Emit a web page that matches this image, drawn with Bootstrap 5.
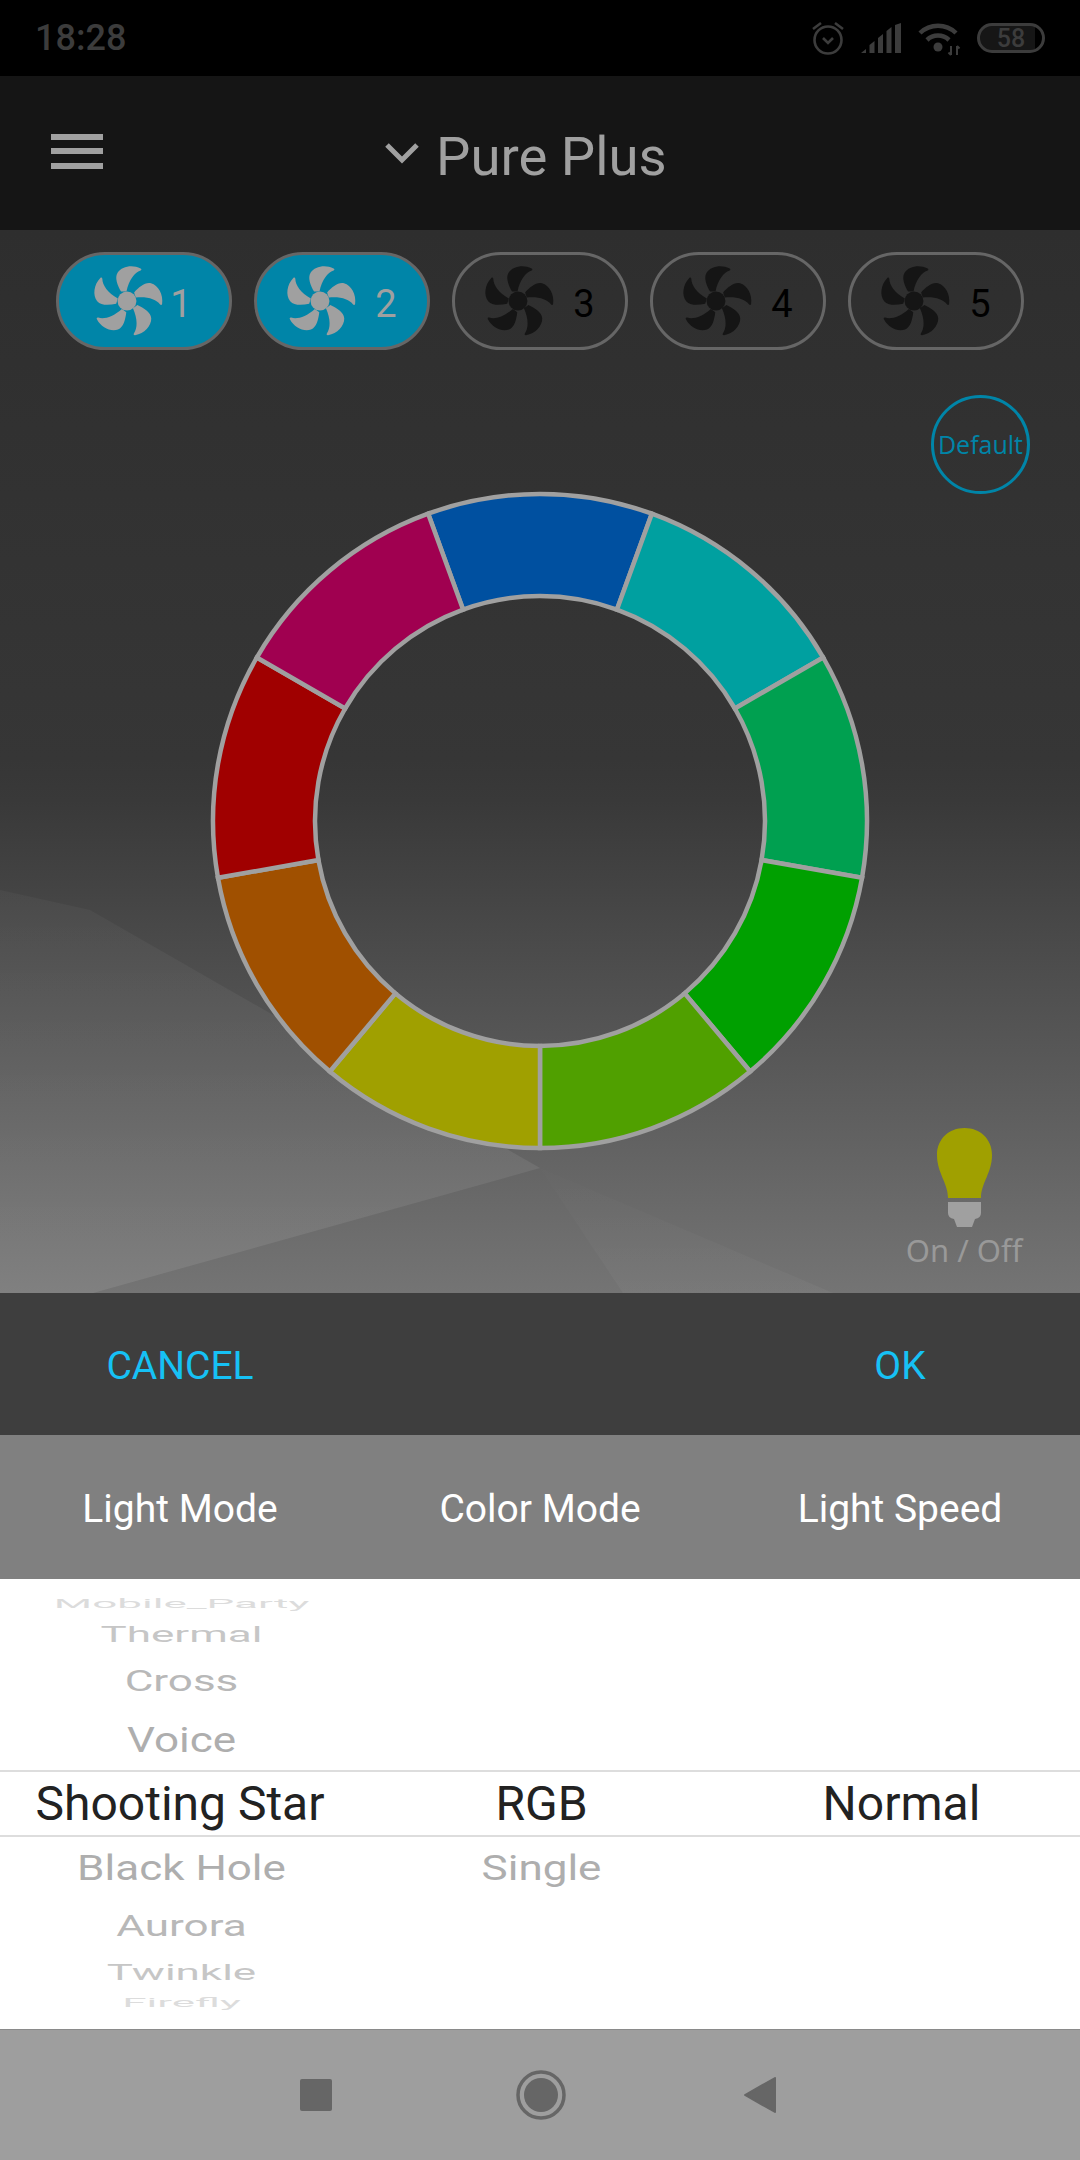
<!DOCTYPE html>
<html lang="en">
<head>
  <meta charset="UTF-8" />
  <meta name="viewport" content="width=device-width, initial-scale=1.0"/>
  <title>Pure Plus</title>
  <link href="https://cdn.jsdelivr.net/npm/bootstrap@5.3.3/dist/css/bootstrap.min.css" rel="stylesheet" />
  <style>
    body {
      width: 1080px;
      height: 2160px;
      background: #000;
      font-family: Roboto, sans-serif;
      overflow: hidden;
    }
    /* status bar */
    .status-bar {
      height: 76px;
      background: #000;
      color: #3c3c3c;
      padding: 0 35px 0 35px;
    }
    .status-time { font-size: 36px; font-weight: 500; line-height: 1; }
    .status-icons svg { display: block; }
    .batt {
      width: 68px;
      height: 30px;
      border: 3px solid #3c3c3c;
      border-radius: 15px;
      font-size: 25px;
      font-weight: 500;
      line-height: 1;
      background: linear-gradient(90deg, #161616 88%, #000 88%);
    }
    /* header */
    .app-header {
      height: 154px;
      background: #151515;
      color: #a0a0a0;
      padding-left: 51px;
    }
    .burger { width: 52px; margin-top: -4px; }
    .burger i { display: block; height: 6px; background: #a0a0a0; margin-bottom: 8.5px; }
    .burger i:last-child { margin-bottom: 0; }
    .app-title { font-size: 54.5px; line-height: 1; margin-left: 17px; margin-top: 7px; }
    .chevron { margin-left: 282px; }
    /* main stage */
    .stage {
      height: 1063px;
      background: linear-gradient(180deg, #2e2e2e 0, #363636 530px, #393939 570px, #747474 1063px);
      overflow: hidden;
    }
    .stage-bg { top: 0; left: 0; }
    .fan-row { padding: 22px 56px 0; gap: 22px; }
    .fan-pill {
      width: 176px;
      height: 98px;
      border: 3px solid #666;
      color: #151515;
    }
    .fan-pill svg { width: 88px; height: 88px; margin-left: 19px; flex: none; }
    .fan-num { width: 40px; margin-left: 2px; font-size: 38px; line-height: 1; color: #000; text-align: center; margin-top: 6px; }
    .fan-on { background: #0085a8; color: #a0a0a0; }
    .fan-on .fan-num { color: #a0a0a0; }
    .fan-first svg { margin-left: 24px; }
    .fan-first .fan-num { margin-left: -10px; }
    .stage-grid {
      display: grid;
      grid-template-columns: 210px 660px 210px;
      margin-top: 45px;
      height: 898px;
    }
    .ring-box { padding-top: 96px; }
    .ring-box svg { display: block; }
    .default-btn {
      width: 99px;
      height: 99px;
      border: 3px solid #0085a8;
      color: #0085a8;
      font-family: "Open Sans", sans-serif;
      font-size: 25px;
      margin-left: 61px;
    }
    .bulb-box {
      margin-top: auto;
      padding-bottom: 24px;
      width: 174px;
      margin-left: 7px;
      color: #999;
      font-family: "Noto Sans", sans-serif;
      font-size: 31px;
      line-height: 1.2;
    }
    .bulb-box svg { display: block; margin: 0 auto 5px; }
    /* dialog bars */
    .action-bar {
      height: 142px;
      padding-top: 5px;
      background: #3e3e3e;
      color: #16c1f5;
      font-size: 39px;
    }
    .tab-bar {
      height: 144px;
      padding-top: 5px;
      background: #808080;
      color: #fff;
      font-size: 39px;
    }
    /* wheel pickers */
    .wheel { height: 450px; background: #fff; }
    .wheel-col {
      display: grid;
      grid-template-rows: 24px 36px 58px 60px 67px 62px 54px 37px 25px;
      padding-top: 13px;
      text-align: center;
      font-size: 44px;
      line-height: 1;
    }
    .wheel-col > div { display: flex; align-items: center; justify-content: center; white-space: nowrap; }
    .wheel-col span { display: block; margin-left: 3px; }
    .w-far { color: #dcdcdc; }
    .w-far span { transform: scaleY(.28); }
    .w-mid { color: #c6c6c6; }
    .w-mid span { transform: scaleY(.52); }
    .w-near { color: #b8b8b8; }
    .w-near span { transform: scaleY(.66); }
    .w-close { color: #aeaeae; }
    .w-close span { transform: scaleY(.8); }
    .w-sel {
      color: #222;
      font-size: 48px;
      border-top: 2px solid #ddd;
      border-bottom: 2px solid #ddd;
    }
    .wheel-col:first-child .w-sel span { margin-left: 0; }
    .w-slot5 { grid-row: 5; }
    .w-slot6 { grid-row: 6; }
    /* system nav */
    .sys-nav {
      height: 131px;
      background: #9e9e9e;
      border-top: 1px solid #8a8a8a;
    }
    .sys-nav svg { display: block; }
    .nav-inner { padding-left: 300px; gap: 184px; }
    .nav-back { margin-left: -6px; }
  </style>
</head>
<body>

  <svg width="0" height="0" class="d-block">
    <defs>
      <linearGradient id="shardA" x1="0" y1="0" x2="0" y2="1">
        <stop offset="0" stop-color="#fff" stop-opacity=".03"/>
        <stop offset="1" stop-color="#fff" stop-opacity=".09"/>
      </linearGradient>
      <linearGradient id="shardB" x1="0" y1="0" x2="0" y2="1">
        <stop offset="0" stop-color="#fff" stop-opacity=".005"/>
        <stop offset="1" stop-color="#fff" stop-opacity=".035"/>
      </linearGradient>
    </defs>
    <symbol id="fan" viewBox="-42 -42 84 84">
      <circle r="9" fill="currentColor"/>
      <path fill="currentColor" d="M-5.700 -9C-9 -15 -12 -22 -9 -27C-5 -33 5 -35 13 -31C14 -30.500 14 -29.500 13 -29C7 -27 2 -20 -.5 -9Z"/>
      <path fill="currentColor" transform="rotate(72)" d="M-5.700 -9C-9 -15 -12 -22 -9 -27C-5 -33 5 -35 13 -31C14 -30.500 14 -29.500 13 -29C7 -27 2 -20 -.5 -9Z"/>
      <path fill="currentColor" transform="rotate(144)" d="M-5.700 -9C-9 -15 -12 -22 -9 -27C-5 -33 5 -35 13 -31C14 -30.500 14 -29.500 13 -29C7 -27 2 -20 -.5 -9Z"/>
      <path fill="currentColor" transform="rotate(216)" d="M-5.700 -9C-9 -15 -12 -22 -9 -27C-5 -33 5 -35 13 -31C14 -30.500 14 -29.500 13 -29C7 -27 2 -20 -.5 -9Z"/>
      <path fill="currentColor" transform="rotate(288)" d="M-5.700 -9C-9 -15 -12 -22 -9 -27C-5 -33 5 -35 13 -31C14 -30.500 14 -29.500 13 -29C7 -27 2 -20 -.5 -9Z"/>
    </symbol>
  </svg>

  <!-- Status bar -->
  <div class="status-bar d-flex align-items-center justify-content-between">
    <span class="status-time">18:28</span>
    <div class="status-icons d-flex align-items-center">
      <svg width="36" height="36" viewBox="0 0 36 36" fill="none" stroke="#3c3c3c" stroke-width="2.6">
        <circle cx="18" cy="20" r="13.500"/>
        <path d="M3 9L11 3M33 9L25 3"/>
        <path d="M13 18L18 23L23 18"/>
      </svg>
      <svg width="41" height="30" viewBox="0 0 41 30" fill="#3c3c3c" style="margin-left:15px">
        <path d="M0 30L5 26V30ZM8.500 30V22L13.500 18V30ZM17 30V15L22 11V30ZM25.500 30V8L30.500 4V30ZM34 30V2L40 0V30Z"/>
      </svg>
      <svg width="43" height="34" viewBox="0 0 43 34" fill="none" stroke="#3c3c3c" stroke-width="4.500" style="margin-left:16px;margin-top:2px">
        <path d="M2 11A26 26 0 0 1 38 11"/>
        <path d="M9 18A16 16 0 0 1 31 18"/>
        <circle cx="20" cy="25" r="4.500" fill="#3c3c3c" stroke="none"/>
        <path stroke-width="2" d="M33 24V33M30.500 30.500L33 33M39 33V24M39 24L41.500 26.500"/>
      </svg>
      <div class="batt d-flex align-items-center justify-content-center ms-3">58</div>
    </div>
  </div>

  <!-- Header -->
  <header class="app-header d-flex align-items-center">
    <div class="burger"><i></i><i></i><i></i></div>
    <svg class="chevron" width="34" height="22" viewBox="0 0 34 22" fill="none" stroke="#a0a0a0" stroke-width="5"><path d="M2 3L17 18L32 3"/></svg>
    <div class="app-title">Pure Plus</div>
  </header>

  <!-- Stage with fans, colour wheel and bulb -->
  <main class="stage position-relative">
    <svg class="stage-bg position-absolute" width="1080" height="1063" viewBox="0 230 1080 1063">
      <polygon points="0,890 90,910 540,1168 93,1293 0,1293" fill="url(#shardA)"/>
      <polygon points="540,1168 833,1293 623,1293" fill="url(#shardB)"/>
    </svg>

    <div class="fan-row d-flex position-relative">
      <div class="fan-pill fan-on fan-first rounded-pill d-flex align-items-center"><svg><use href="#fan"/></svg><span class="fan-num">1</span></div>
      <div class="fan-pill fan-on rounded-pill d-flex align-items-center"><svg><use href="#fan"/></svg><span class="fan-num">2</span></div>
      <div class="fan-pill rounded-pill d-flex align-items-center"><svg><use href="#fan"/></svg><span class="fan-num">3</span></div>
      <div class="fan-pill rounded-pill d-flex align-items-center"><svg><use href="#fan"/></svg><span class="fan-num">4</span></div>
      <div class="fan-pill rounded-pill d-flex align-items-center"><svg><use href="#fan"/></svg><span class="fan-num">5</span></div>
    </div>

    <div class="stage-grid position-relative">
      <div></div>
      <div class="ring-box">
        <svg id="ring" width="660" height="660" viewBox="-330 -330 660 660"></svg>
      </div>
      <div class="d-flex flex-column">
        <div class="default-btn rounded-circle d-flex align-items-center justify-content-center">Default</div>
        <div class="bulb-box text-center">
          <svg width="55" height="99" viewBox="0 0 55 99">
            <path fill="#a0a000" d="M11 70C11 55 0 45 0 27C0 11 12 0 27.500 0C43 0 55 11 55 27C55 45 44 55 44 70Z"/>
            <path fill="#a0a0a0" d="M11 74H44V85Q44 90 38 91L35 99H20L17 91Q11 90 11 85Z"/>
          </svg>
          On / Off
        </div>
      </div>
    </div>
  </main>

  <!-- Cancel / OK -->
  <div class="action-bar row g-0 align-items-center text-center">
    <div class="col-4">CANCEL</div>
    <div class="col-4"></div>
    <div class="col-4">OK</div>
  </div>

  <!-- Picker titles -->
  <div class="tab-bar row g-0 align-items-center text-center">
    <div class="col-4">Light Mode</div>
    <div class="col-4">Color Mode</div>
    <div class="col-4">Light Speed</div>
  </div>

  <!-- Wheel pickers -->
  <div class="wheel row g-0">
    <div class="col-4 wheel-col">
      <div class="w-far"><span>Mobile_Party</span></div>
      <div class="w-mid"><span>Thermal</span></div>
      <div class="w-near"><span>Cross</span></div>
      <div class="w-close"><span>Voice</span></div>
      <div class="w-sel"><span>Shooting Star</span></div>
      <div class="w-close"><span>Black Hole</span></div>
      <div class="w-near"><span>Aurora</span></div>
      <div class="w-mid"><span>Twinkle</span></div>
      <div class="w-far"><span>Firefly</span></div>
    </div>
    <div class="col-4 wheel-col">
      <div class="w-sel w-slot5"><span>RGB</span></div>
      <div class="w-close w-slot6"><span>Single</span></div>
    </div>
    <div class="col-4 wheel-col">
      <div class="w-sel w-slot5"><span>Normal</span></div>
    </div>
  </div>

  <!-- System navigation -->
  <nav class="sys-nav d-flex align-items-center">
    <div class="nav-inner d-flex align-items-center">
      <svg width="32" height="32" viewBox="0 0 32 32"><rect width="32" height="32" rx="2" fill="#666"/></svg>
      <svg width="50" height="50" viewBox="0 0 50 50"><circle cx="25" cy="25" r="23" fill="none" stroke="#666" stroke-width="3.500"/><circle cx="25" cy="25" r="17" fill="#666"/></svg>
      <svg class="nav-back" width="32" height="36" viewBox="0 0 32 36"><path fill="#666" stroke="#666" stroke-width="2" stroke-linejoin="round" d="M1 18L31 1V35Z"/></svg>
    </div>
  </nav>

  <script>
    // colour wheel: nine 40 degree segments, blue one centred on top
    const colors = ["#0050a0", "#00a0a0", "#00a050", "#00a000", "#50a000", "#a0a000", "#a05000", "#a00000", "#a00050"];
    const R = 327, r = 225;
    const pt = (rad, deg) => {
      const a = (deg - 90) * Math.PI / 180;
      return (rad * Math.cos(a)).toFixed(2) + " " + (rad * Math.sin(a)).toFixed(2);
    };
    document.getElementById("ring").innerHTML = colors.map((c, i) => {
      const a0 = -20 + i * 40, a1 = a0 + 40;
      return `<path fill="${c}" stroke="#a0a0a0" stroke-width="4.5" d="M${pt(R, a0)}A${R} ${R} 0 0 1 ${pt(R, a1)}L${pt(r, a1)}A${r} ${r} 0 0 0 ${pt(r, a0)}Z"/>`;
    }).join("");
  </script>
  <script src="https://cdn.jsdelivr.net/npm/bootstrap@5.3.3/dist/js/bootstrap.bundle.min.js"></script>
</body>
</html>
